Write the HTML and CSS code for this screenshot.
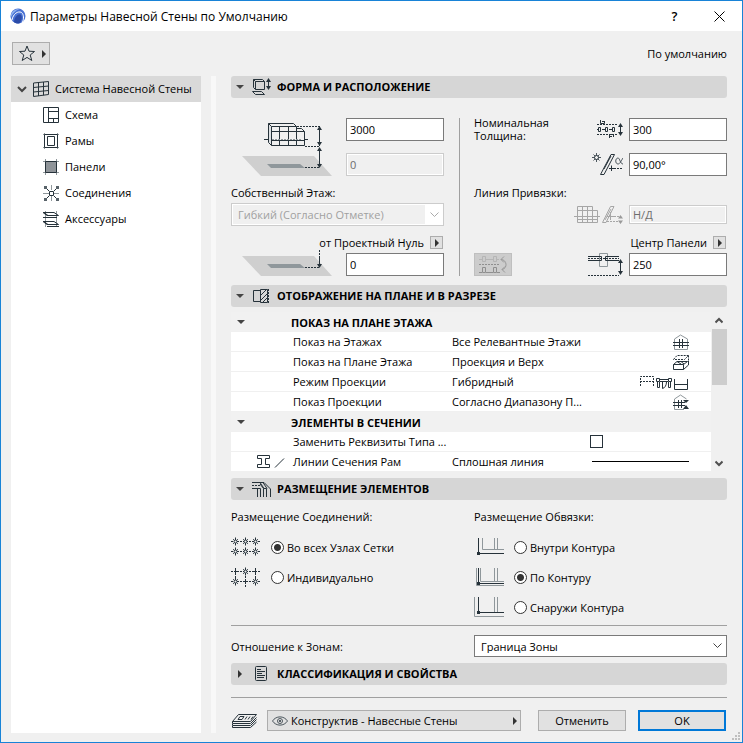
FILE: index.html
```html
<!DOCTYPE html>
<html lang="ru">
<head>
    <meta charset="UTF-8">
    <meta name="viewport" content="width=device-width, initial-scale=1.0">
    <title>Параметры Навесной Стены по Умолчанию</title>
    <link rel="stylesheet" href="styles.css">
</head>
<body>
    <div class="window">
        <header class="titlebar">
            <svg class="logo" width="16" height="16" viewBox="0 0 16 16">
                <circle cx="8" cy="8" r="7.500" fill="#4a72d4"/>
                <path d="M.5 10C.5 4 5 .5 10 .8C6 2 3 5 .5 10Z" fill="#8fb2ee"/>
                <path d="M2 12C3 6 8 2.500 11.500 4.500C14 6.500 14 11 12.500 14" fill="none" stroke="#fff"/>
                <path d="M4 14C4.500 9 8 5.500 10.500 6.500C12.500 8 12 12 10 15C8 16 5.500 15.500 4 14Z" fill="#2b4ba8"/>
            </svg>
            <h1>Параметры Навесной Стены по Умолчанию</h1>
            <button class="win-btn" type="button" aria-label="Справка">?</button>
            <button class="win-btn" type="button" aria-label="Закрыть">
                <svg width="11" height="11" viewBox="0 0 11 11"><path d="M.5 .5L10.500 10.500M10.500 .5L.5 10.500" stroke="#000" fill="none"/></svg>
            </button>
        </header>

        <div class="toolbar">
            <button class="favorite" type="button" aria-label="Избранное">
                <svg width="16" height="17" viewBox="0 0 16 17"><path class="ln" d="M8 1L10 6.200L15.500 6.500L11.200 10L12.800 15.500L8 12.400L3.200 15.500L4.800 10L.5 6.500L6 6.200Z"/></svg>
                <svg width="4" height="8" viewBox="0 0 4 8"><path d="M0 0L4 4L0 8Z" fill="#333"/></svg>
            </button>
            <span>По умолчанию</span>
        </div>

        <div class="content">
            <nav class="tree">
                <a class="tree-root" href="#">
                    <svg width="10" height="7" viewBox="0 0 10 7"><path d="M1 1L5 5L9 1" fill="none" stroke="#444" stroke-width="2"/></svg>
                    <svg width="16" height="16" viewBox="0 0 16 16">
                        <path class="ln" d="M.5 2L15.500 .5V13.500L.5 15.500ZM5.500 1.500V15M10.500 1V14.300M.5 6.500L15.500 5M.5 11L15.500 9.500"/>
                    </svg>
                    <span>Система Навесной Стены</span>
                </a>
                <a href="#">
                    <svg width="16" height="16" viewBox="0 0 16 16"><path class="ln" d="M.5 .5H15.500V15.500H.5ZM5.500 .5V15.500M5.500 4.500H15.500M5.500 11.500H15.500M10.500 11.500V15.500"/></svg>
                    <span>Схема</span>
                </a>
                <a href="#">
                    <svg width="16" height="16" viewBox="0 0 16 16">
                        <path class="ln soft" d="M1.500 0V16M14.500 0V16M0 1.500H16M0 14.500H16"/>
                        <path class="ln" d="M1.500 1.500H14.500V14.500H1.500ZM4.500 3.500H11.500V12.500H4.500Z"/>
                    </svg>
                    <span>Рамы</span>
                </a>
                <a href="#">
                    <svg width="16" height="16" viewBox="0 0 16 16">
                        <path class="ln soft" d="M2.500 0V16M13.500 0V16M0 2.500H16M0 13.500H16"/>
                        <path d="M2.500 2.500H13.500V13.500H2.500Z" fill="#8f9499" stroke="#26323a"/>
                    </svg>
                    <span>Панели</span>
                </a>
                <a href="#">
                    <svg width="16" height="16" viewBox="0 0 16 16">
                        <path class="ln soft" d="M8.500 0V5M8.500 10V16M0 8.500H6M11 8.500H16"/>
                        <path class="ln" d="M6.500 6.500H10.500V10.500H6.500ZM6 6L3 3M11 6L14 3M6 11L3 14M11 11L14 14"/>
                        <path d="M1 1H4V4H1ZM13 1H16V4H13ZM1 13H4V16H1ZM13 13H16V16H13Z" fill="#59636a"/>
                    </svg>
                    <span>Соединения</span>
                </a>
                <a href="#">
                    <svg width="16" height="16" viewBox="0 0 16 16">
                        <path class="ln soft" d="M2.500 0V16M13.500 0V16"/>
                        <path class="ln" d="M0 1.500H11L15.500 4.500H4ZM1 1.500L5 4.500M0 6.500H14M0 10.500H11L15.500 13.500H4ZM1 10.500L5 13.500M4 15.500H16"/>
                    </svg>
                    <span>Аксессуары</span>
                </a>
            </nav>

            <div class="splitter"></div>

            <main class="panels">
                <h2 class="panel-head">
                    <i class="arrow-down"></i>
                    <svg width="20" height="18" viewBox="0 0 20 18">
                        <path class="ln" d="M1.500 1.500H10.500L12.500 3.500V11.500H3.500L1.500 9.500ZM1.500 1.500L3.500 3.500V11.500M3.500 3.500H12.500M.5 13.500H9.500L12.500 16.500H3.500ZM16.500 2V11"/>
                        <path class="solid" d="M16.500 0L19 4H14ZM16.500 12L19 8H14Z"/>
                    </svg>
                    <span>ФОРМА И РАСПОЛОЖЕНИЕ</span>
                </h2>

                <section class="columns shape">
                    <div class="column">
                        <div class="field-row">
                            <svg width="90" height="58" viewBox="0 0 90 58">
                                <path d="M0 38H72L90 58H19Z" fill="#cfcfcf"/>
                                <path d="M25 46H58L63 50H29Z" fill="#8f979b"/>
                                <path d="M26 5L30 9V27L26 24Z" fill="#dde1e4"/>
                                <path class="ln" d="M26.500 24.500V5.500H51.500L54.500 8.500V27.500H29.500L26.500 24.500M29.500 27.500V8.500H54.500M26.500 5.500L29.500 8.500M54.500 10.500H59.500L62.500 13.500V27.500H54.500M54.500 13.500H62.500M37.500 8.500V27.500M46.500 8.500V27.500M29.500 13.500H54.500M29.500 22.500H62.500M22 21.500H26M62 21.500H66"/>
                                <path class="ln soft dash" d="M30 21.500H60"/>
                                <path class="ln dash" d="M55 8.500H78M63 28.500H78M63 49.500H78"/>
                                <path class="ln" d="M77.500 10V28M77.500 30V49"/>
                                <path class="solid" d="M77.500 8L80 12H75ZM77.500 28L80 24H75ZM77.500 29L80 33H75ZM77.500 50L80 46H75Z"/>
                            </svg>
                            <div class="stack">
                                <input type="text" value="3000" aria-label="Высота">
                                <input type="text" value="0" aria-label="Отметка" disabled>
                            </div>
                        </div>
                        <label class="caption" for="story">Собственный Этаж:</label>
                        <select id="story" class="wide" disabled>
                            <option>Гибкий (Согласно Отметке)</option>
                        </select>
                        <div class="link-row">
                            <label for="zero">от Проектный Нуль</label>
                            <button class="mini" type="button" aria-label="Выбрать начало отсчета"></button>
                        </div>
                        <div class="field-row">
                            <svg class="over" width="90" height="26" viewBox="0 0 90 26">
                                <path d="M0 6H72L90 26H19Z" fill="#cfcfcf"/>
                                <path d="M25 14H58L63 18H29Z" fill="#8f979b"/>
                                <path class="ln dash" d="M63 17.500H77M77.500 0V6"/>
                                <path class="ln" d="M77.500 6V17"/>
                                <path class="solid" d="M77.500 18L80 14H75Z"/>
                            </svg>
                            <input type="text" id="zero" value="0">
                        </div>
                    </div>

                    <div class="divider"></div>

                    <div class="column">
                        <div class="field-row">
                            <label class="grow" for="thick">Номинальная Толщина:</label>
                            <svg width="26" height="23" viewBox="0 0 26 23">
                                <path class="ln dash" d="M0 6.500H20M0 16.500H20"/>
                                <path class="ln" d="M3.500 2V5.500H7.500V3M5 3.500H7M12.500 20V16.500H16.500V19M13 18.500H15M0 11.500H2M5 11.500H9M12 11.500H16M1.500 9.500H3.500V13.500H1.500ZM8.500 9.500H10.500V13.500H8.500ZM15.500 9.500H17.500V13.500H15.500ZM23.500 7V16"/>
                                <path class="solid" d="M23.500 5L26 9H21ZM23.500 18L26 14H21Z"/>
                            </svg>
                            <input type="text" id="thick" value="300">
                        </div>
                        <div class="field-row spaced">
                            <svg width="31" height="23" viewBox="0 0 31 23">
                                <path class="ln thin" d="M4.500 0V9M0 4.500H9M1.500 1.500L7.500 7.500M7.500 1.500L1.500 7.500"/>
                                <circle cx="4.500" cy="4.500" r="2" fill="#f0f0f0" stroke="#26323a"/>
                                <path class="ln" d="M8.500 21.500L19 1.500H22.500L12 21.500ZM12 16L19 3M19.500 12.500V18M17 15.500H22"/>
                                <path class="ln dash" d="M22 15.500H31"/>
                                <path class="ln thin" d="M31 5C29 8 28 11 26 11C23 11 23 5 26 5C28 5 28 11 31 11"/>
                            </svg>
                            <input type="text" value="90,00°" aria-label="Угол наклона">
                        </div>
                        <label class="caption" for="refline">Линия Привязки:</label>
                        <div class="field-row refline">
                            <svg width="49" height="19" viewBox="0 0 49 19">
                                <path class="ln pale" d="M3.500 1.500H18.500V5.500H23.500V17.500H3.500ZM8.500 1V17M13.500 1V17M18.500 5V17M3.500 5.500H19M3.500 14.500H23M0 11.500H26M28.500 17.500L36.500 1.500H40L32 17.500ZM31 15L37 4M36.500 7V15M33 11.500H40"/>
                                <path class="ln pale dash" d="M33 16.500H45M40 11.500H45"/>
                                <path d="M46.500 10L49 13.500H44ZM46.500 19L49 15.500H44Z" fill="#999"/>
                            </svg>
                            <input class="short" type="text" id="refline" value="Н/Д" disabled>
                        </div>
                        <div class="link-row center">
                            <label for="offset">Центр Панели</label>
                            <button class="mini" type="button" aria-label="Выбрать привязку"></button>
                        </div>
                        <div class="field-row">
                            <button class="flip" type="button" aria-label="Отразить" disabled>
                                <svg width="28" height="19" viewBox="0 0 28 19">
                                    <path d="M0 4.500H3M7 4.500H14M18 4.500H20M3.500 1.500H6.500V6.500H3.500ZM14.500 1.500H17.500V6.500H14.500Z" fill="none" stroke="#b5b5b5"/>
                                    <path d="M0 17.500H3M7 17.500H14M18 17.500H21M3.500 12.500H6.500V17.500H3.500ZM14.500 12.500H17.500V17.500H14.500Z" fill="none" stroke="#8f8f8f"/>
                                    <path class="dash" d="M0 9.500H21" fill="none" stroke="#8f8f8f"/>
                                    <path d="M22 4.500C28 4.500 29 13.500 23 14.500M25 1.500L22 4.500L25 7.500M26 11.500L23 14.500L26 17.500" fill="none" stroke="#999"/>
                                </svg>
                            </button>
                            <svg width="35" height="23" viewBox="0 0 35 23">
                                <path class="ln soft" d="M11.500 .5H19.500V13.500H11.500Z"/>
                                <path class="ln" d="M0 3.500H13.500V7.500H0M31 3.500H17.500V7.500H31M32.500 8V20"/>
                                <path class="ln dash" d="M0 5.500H31M0 22.500H31"/>
                                <path class="solid" d="M32.500 6L35 10H30ZM32.500 22L35 18H30Z"/>
                            </svg>
                            <input type="text" id="offset" value="250">
                        </div>
                    </div>
                </section>

                <h2 class="panel-head">
                    <i class="arrow-down"></i>
                    <svg width="20" height="18" viewBox="0 0 20 18">
                        <path class="ln" d="M8 3.500H1.500V14.500H8M8.500 2.500H15.500V15.500H8.500ZM9 8L14 3M9 13L15 7M11 15L15 11"/>
                        <path class="ln dash" d="M16.500 2V17"/>
                    </svg>
                    <span>ОТОБРАЖЕНИЕ НА ПЛАНЕ И В РАЗРЕЗЕ</span>
                </h2>

                <div class="list">
                    <table>
                        <colgroup><col class="c-icon"><col class="c-name"><col><col class="c-mark"></colgroup>
                        <tbody>
                            <tr class="group">
                                <td><i class="arrow-down"></i></td>
                                <th colspan="3">ПОКАЗ НА ПЛАНЕ ЭТАЖА</th>
                            </tr>
                            <tr>
                                <td></td><td>Показ на Этажах</td><td>Все Релевантные Этажи</td>
                                <td class="mark">
                                    <svg width="16" height="16" viewBox="0 0 16 16">
                                        <path class="ln soft" d="M1.500 15.500V5L7.500 1L14.500 5V15.500Z"/>
                                        <path class="ln" d="M0 8.500H16M0 11.500H16M6.500 5V14M9.500 5V14"/>
                                    </svg>
                                </td>
                            </tr>
                            <tr>
                                <td></td><td>Показ на Плане Этажа</td><td>Проекция и Верх</td>
                                <td class="mark">
                                    <svg width="16" height="16" viewBox="0 0 16 16">
                                        <path class="ln dash" d="M.5 5.500L4 1.500H15.500L11.500 5.500ZM15.500 1.500V8"/>
                                        <path class="ln" d="M.5 10.500H10.500V15.500H.5ZM.5 10.500L4 7.500H14.500L10.500 10.500M10.500 15.500L15.500 11V7M4 7.500L8 10M8 7.500L11 10"/>
                                    </svg>
                                </td>
                            </tr>
                            <tr>
                                <td></td><td>Режим Проекции</td><td>Гибридный</td>
                                <td class="mark">
                                    <svg width="49" height="16" viewBox="0 0 49 16">
                                        <path class="ln dash" d="M.5 12V2.500H13.500V12M0 7.500H14"/>
                                        <path class="ln" d="M16.500 4.500H19.500V7.500H16.500ZM28.500 4.500H31.500V7.500H28.500ZM17.500 8V13.500H19.500V8M28.500 8V13.500H30.500V8M20 5.500H28M20 7.500H28M22.500 8V14.500C25 14 26.500 11 26.500 8M34.500 5V15.500H47.500V5M34.500 10.500H47.500"/>
                                    </svg>
                                </td>
                            </tr>
                            <tr>
                                <td></td><td>Показ Проекции</td><td>Согласно Диапазону П...</td>
                                <td class="mark">
                                    <svg width="16" height="16" viewBox="0 0 16 16">
                                        <path class="ln soft" d="M11 15.500H1.500V5L7.500 1L13.500 5"/>
                                        <path class="ln" d="M0 8.500H12M0 11.500H12M5.500 6V14M8.500 6V14"/>
                                        <path class="solid" d="M10 6H16L13 9ZM10 15H16L13 11Z"/>
                                    </svg>
                                </td>
                            </tr>
                            <tr class="group">
                                <td><i class="arrow-down"></i></td>
                                <th colspan="3">ЭЛЕМЕНТЫ В СЕЧЕНИИ</th>
                            </tr>
                            <tr>
                                <td></td><td><label for="replace">Заменить Реквизиты Типа ...</label></td><td></td>
                                <td><input type="checkbox" id="replace"></td>
                            </tr>
                            <tr>
                                <td class="pen">
                                    <svg width="28" height="14" viewBox="0 0 28 14">
                                        <path class="ln" d="M.5 .5H12.500V3.500H8.500V9.500H12.500V12.500H.5V9.500H4.500V3.500H.5ZM18 12.500L27 3.500"/>
                                    </svg>
                                </td>
                                <td>Линии Сечения Рам</td><td>Сплошная линия</td>
                                <td class="mark"><i class="line-sample"></i></td>
                            </tr>
                        </tbody>
                    </table>
                    <div class="scrollbar">
                        <svg width="8" height="7" viewBox="0 0 8 7"><path d="M.5 5.500L4 2L7.500 5.500" fill="none" stroke="#505050" stroke-width="2"/></svg>
                        <div class="thumb"></div>
                        <svg width="8" height="7" viewBox="0 0 8 7"><path d="M.5 1.500L4 5L7.500 1.500" fill="none" stroke="#505050" stroke-width="2"/></svg>
                    </div>
                </div>

                <h2 class="panel-head">
                    <i class="arrow-down"></i>
                    <svg width="20" height="18" viewBox="0 0 20 18">
                        <path class="ln" d="M0 2.500H12L18.500 9V17M0 8.500H8.500V17M5.500 9V17M11.500 17V8.500L8 4M14.500 17V8.500H11.500M8 2.500L12 8.500M11 2.500L15 8.500"/>
                        <path class="ln dash" d="M0 5.500H9"/>
                    </svg>
                    <span>РАЗМЕЩЕНИЕ ЭЛЕМЕНТОВ</span>
                </h2>

                <section class="columns placement">
                    <div class="column">
                        <p>Размещение Соединений:</p>
                        <div class="radio-row">
                            <svg width="30" height="20" viewBox="0 0 30 20">
                                <defs>
                                    <g id="node">
                                        <path class="ln thin" d="M-2.500 -2.500L2.500 2.500M2.500 -2.500L-2.500 2.500"/>
                                        <path class="ln" d="M0 -4V4"/>
                                        <circle r="1.500" fill="#f0f0f0" stroke="#26323a"/>
                                    </g>
                                </defs>
                                <path class="ln dash" d="M0 4.500H30M0 14.500H30"/>
                                <use href="#node" x="4.500" y="4.500"/><use href="#node" x="14.500" y="4.500"/><use href="#node" x="24.500" y="4.500"/>
                                <use href="#node" x="4.500" y="14.500"/><use href="#node" x="14.500" y="14.500"/><use href="#node" x="24.500" y="14.500"/>
                            </svg>
                            <input type="radio" name="joints" id="jAll" checked>
                            <label for="jAll">Во всех Узлах Сетки</label>
                        </div>
                        <div class="radio-row">
                            <svg width="30" height="20" viewBox="0 0 30 20">
                                <path class="ln dash" d="M0 4.500H30M0 14.500H30M4.500 6V11M14.500 9V20M24.500 6V11"/>
                                <path class="ln" d="M3 4.500H6M4.500 1V7M23 4.500H26M24.500 1V7M13 14.500H16M14.500 13V16"/>
                                <use href="#node" x="14.500" y="4.500"/><use href="#node" x="4.500" y="14.500"/><use href="#node" x="24.500" y="14.500"/>
                            </svg>
                            <input type="radio" name="joints" id="jOne">
                            <label for="jOne">Индивидуально</label>
                        </div>
                    </div>
                    <div></div>
                    <div class="column">
                        <p>Размещение Обвязки:</p>
                        <div class="radio-row">
                            <svg width="30" height="20" viewBox="0 0 30 20">
                                <path class="ln soft" d="M8.500 1V12.500H30M20.500 1V12M23.500 1V12"/>
                                <path class="ln" d="M4.500 1V16.500H30"/>
                                <path class="solid" d="M3 15H6V18H3Z"/>
                            </svg>
                            <input type="radio" name="frame" id="fIn">
                            <label for="fIn">Внутри Контура</label>
                        </div>
                        <div class="radio-row">
                            <svg width="30" height="20" viewBox="0 0 30 20">
                                <path class="ln soft" d="M2.500 1V18.500H30M6.500 1V14.500H30M20.500 1V14M23.500 1V14"/>
                                <path class="ln" d="M4.500 1V16.500H30"/>
                                <path class="solid" d="M3 15H6V18H3Z"/>
                            </svg>
                            <input type="radio" name="frame" id="fOn" checked>
                            <label for="fOn">По Контуру</label>
                        </div>
                        <div class="radio-row">
                            <svg width="30" height="20" viewBox="0 0 30 20">
                                <path class="ln soft" d="M.5 0V19.500H30M20.500 0V15M23.500 0V15"/>
                                <path class="ln" d="M4.500 0V15.500H30"/>
                                <path class="solid" d="M3 14H6V17H3Z"/>
                            </svg>
                            <input type="radio" name="frame" id="fOut">
                            <label for="fOut">Снаружи Контура</label>
                        </div>
                    </div>
                </section>

                <div class="columns zones">
                    <label for="zone">Отношение к Зонам:</label>
                    <div></div>
                    <select id="zone" class="wide">
                        <option>Граница Зоны</option>
                    </select>
                </div>

                <h2 class="panel-head">
                    <i class="arrow-right"></i>
                    <svg width="20" height="18" viewBox="0 0 20 18">
                        <rect class="ln" x="3.500" y="1.500" width="11" height="14" rx="1"/>
                        <path class="ln" d="M5 4.500H9M5 6.500H13M5 8.500H10M5 10.500H13M5 12.500H12"/>
                    </svg>
                    <span>КЛАССИФИКАЦИЯ И СВОЙСТВА</span>
                </h2>

                <footer class="bottom">
                    <svg width="28" height="16" viewBox="0 0 28 16">
                        <path class="ln" d="M7.500 1.500H25.500L19.500 8.500H1.500ZM9 3.500H13L11 6.500H7ZM16 3.500L14 6.500M19 3.500L17 6.500M22 3.500L20 6.500M1.500 8.500V10.500H19.500L25.500 4.500M1.500 11V12.500H19.500L25.500 6.500M1.500 13V14.500H19.500L25.500 9"/>
                    </svg>
                    <button class="layer" type="button">
                        <svg width="16" height="10" viewBox="0 0 16 10">
                            <path class="ln thin" d="M.5 5C4 -.5 12 -.5 15.500 5C12 10.500 4 10.500 .5 5Z"/>
                            <circle class="ln thin" cx="8" cy="5" r="2.500"/><circle class="solid" cx="8" cy="5" r="1"/>
                        </svg>
                        <span>Конструктив - Навесные Стены</span>
                        <i class="arrow-right"></i>
                    </button>
                    <button class="btn" type="button">Отменить</button>
                    <button class="btn ok" type="button">OK</button>
                </footer>
            </main>
        </div>

        <svg class="grip" width="8" height="8" viewBox="0 0 8 8"><path d="M6 0H8V2H6ZM3 3H5V5H3ZM6 3H8V5H6ZM0 6H2V8H0ZM3 6H5V8H3ZM6 6H8V8H6Z" fill="#bfbfbf"/></svg>
    </div>
</body>
</html>
```

FILE: styles.css
```css
* {
    margin: 0;
    padding: 0;
    box-sizing: border-box;
}

body,
button,
input,
select {
    font-family: "Open Sans", "Noto Sans", sans-serif;
    font-size: 11px;
    line-height: 13px;
    color: #000;
}

svg {
    display: block;
    flex: none;
}

/* icon strokes */
.ln {
    fill: none;
    stroke: #26323a;
    stroke-width: 1px;
}

.thin {
    stroke: #4d575e;
}

.soft {
    stroke: #8f979b;
}

.pale {
    stroke: #a6a6a6;
}

.dash {
    stroke-dasharray: 2 1;
}

.solid {
    fill: #26323a;
}

.arrow-down {
    border: 4px solid transparent;
    border-top-color: #444;
    border-bottom: 0;
}

.arrow-right {
    border: 4px solid transparent;
    border-left-color: #333;
    border-right: 0;
}

.window {
    position: relative;
    display: flex;
    flex-direction: column;
    min-height: 100vh;
    background: #f0f0f0;
    border: 1px solid #1883d7;
}

.titlebar {
    display: flex;
    align-items: center;
    height: 30px;
    padding-left: 9px;
    background: #fff;
}

.titlebar h1 {
    flex: 1;
    margin-left: 4px;
    font-size: 12px;
    font-weight: normal;
}

.win-btn {
    display: flex;
    align-items: center;
    justify-content: center;
    width: 45px;
    height: 30px;
    border: none;
    background: none;
    font-size: 13px;
    font-weight: 600;
}

.toolbar {
    display: flex;
    align-items: center;
    justify-content: space-between;
    padding: 11px 15px 11px 11px;
}

.favorite {
    display: flex;
    align-items: center;
    justify-content: flex-end;
    gap: 7px;
    width: 38px;
    height: 23px;
    padding-right: 3px;
    border: 1px solid #adadad;
    background: #e1e1e1;
}

.content {
    display: flex;
    flex: 1;
    padding: 0 15px 9px 10px;
}

/* settings tree */
.tree {
    width: 190px;
    background: #fff;
}

.tree a {
    display: flex;
    align-items: center;
    gap: 6px;
    height: 26px;
    padding-left: 32px;
    color: #000;
    text-decoration: none;
}

.tree .tree-root {
    padding-left: 6px;
    background: #d9d9d9;
}

.tree span,
.panel-head span {
    padding-bottom: 2px;
}

.splitter {
    width: 5px;
    margin: 0 15px 0 10px;
    background: #f8f8f8;
}

.panels {
    flex: 1;
    min-width: 0;
}

.panel-head {
    display: flex;
    align-items: center;
    height: 22px;
    padding-left: 5px;
    border-radius: 3px;
    background: #d6d6d6;
    font-size: 11px;
    font-weight: bold;
}

.panel-head svg {
    margin: 0 5px 0 8px;
}

.panel-head .arrow-right {
    margin: 0 2px;
}

.columns {
    display: grid;
    grid-template-columns: 213fr 2px 253fr;
    column-gap: 14px;
}

/* geometry */
.shape {
    padding: 20px 0 9px;
}

.divider {
    justify-self: end;
    width: 1px;
    background: #a0a0a0;
}

.field-row {
    display: flex;
    align-items: flex-end;
    justify-content: flex-end;
}

.shape .column:first-child .field-row {
    gap: 14px;
}

.shape .column:last-child .field-row {
    gap: 6px;
}

.over {
    margin-top: -3px;
}

.grow {
    flex: 1;
    margin: -2px 0 -1px;
}

.spaced {
    margin-top: 12px;
}

.stack {
    display: flex;
    flex-direction: column;
    gap: 12px;
}

input[type="text"] {
    width: 98px;
    height: 23px;
    padding: 0 3px;
    border: 1px solid #7a7a7a;
    background: #fff;
}

input[type="text"]:disabled {
    border-color: #ccc;
    background: #f0f0f0;
    box-shadow: inset 0 0 0 1px #fff;
    color: #6d6d6d;
}

input[type="text"].short {
    height: 19px;
}

.caption {
    display: block;
    margin: 10px 0 4px;
}

.refline {
    margin-top: 6px;
}

select.wide {
    display: block;
    width: 100%;
    height: 23px;
    padding: 0 6px;
    border: 1px solid #7a7a7a;
    border-radius: 0;
    appearance: none;
    background: #fff url("data:image/svg+xml,%3Csvg xmlns='http://www.w3.org/2000/svg' width='9' height='6'%3E%3Cpath d='M.5 .5L4.500 4.500L8.500 .5' fill='none' stroke='%23444'/%3E%3C/svg%3E") no-repeat right 4px center;
}

select.wide:disabled {
    border-color: #ccc;
    opacity: 1;
    color: #a0a0a0;
    background-image: url("data:image/svg+xml,%3Csvg xmlns='http://www.w3.org/2000/svg' width='9' height='6'%3E%3Cpath d='M.5 .5L4.500 4.500L8.500 .5' fill='none' stroke='%23aaa'/%3E%3C/svg%3E"), linear-gradient(#f0f0f0, #f0f0f0);
    background-position: right 4px center, 1px 1px;
    background-size: auto, calc(100% - 19px) calc(100% - 2px);
    background-repeat: no-repeat;
}

.link-row {
    display: flex;
    align-items: center;
    justify-content: flex-end;
    gap: 6px;
    padding: 10px 1px 4px 0;
}

.link-row.center {
    padding-top: 12px;
}

.mini {
    display: flex;
    align-items: center;
    justify-content: center;
    width: 13px;
    height: 13px;
    border: 1px solid #adadad;
    background: #e1e1e1;
}

.mini::before {
    content: "";
    border: 4px solid transparent;
    border-left-color: #333;
    border-right: 0;
}

.flip {
    display: flex;
    align-items: center;
    justify-content: center;
    width: 38px;
    height: 23px;
    margin-right: auto;
    border: 1px solid #bfbfbf;
    background: #ccc;
}

/* plan and section list */
.list {
    display: flex;
    margin: 5px 0 6px;
}

.list table {
    flex: 1;
    table-layout: fixed;
    border-spacing: 0;
    background: #fff;
}

.list tr {
    height: 20px;
}

.list td {
    padding-left: 2px;
    border-bottom: 1px solid #f0f0f0;
}

.list .group {
    background: #f1f1f1;
}

.list th {
    text-align: left;
}

.c-icon {
    width: 60px;
}

.c-name {
    width: 159px;
}

.c-mark {
    width: 123px;
}

.list .arrow-down {
    display: block;
    width: 0;
    margin-left: 4px;
}

.list td.mark {
    padding-right: 22px;
}

.mark svg {
    margin-left: auto;
}

.pen svg {
    margin-left: 24px;
}

.line-sample {
    display: block;
    height: 1px;
    margin-left: 2px;
    background: #000;
}

input[type="checkbox"] {
    display: block;
    width: 13px;
    height: 13px;
    border: 1px solid #26323a;
    appearance: none;
    background: #fff;
}

input[type="checkbox"]:checked {
    background: #26323a;
}

.scrollbar {
    display: flex;
    flex-direction: column;
    align-items: center;
    width: 16px;
    padding: 5px 0;
}

.thumb {
    width: 15px;
    height: 56px;
    margin: 5px 0 auto;
    background: #cdcdcd;
}

/* element placement */
.placement {
    padding: 10px 0 3px;
    border-bottom: 1px solid #a0a0a0;
}

.placement p {
    margin-bottom: 9px;
}

.radio-row {
    display: flex;
    align-items: center;
    height: 30px;
}

input[type="radio"] {
    width: 13px;
    height: 13px;
    margin: 0 3px 0 10px;
    border: 1px solid #333;
    border-radius: 50%;
    appearance: none;
    background: #fff;
}

input[type="radio"]:checked {
    background: radial-gradient(circle, #333 3px, #fff 4px);
}

.zones {
    align-items: center;
    padding: 9px 0 6px;
}

.zones select.wide {
    height: 22px;
}

.bottom {
    display: flex;
    align-items: center;
    margin-top: 12px;
    padding: 12px 1px 0 0;
    border-top: 1px solid #a0a0a0;
}

.layer {
    display: flex;
    flex: 1;
    align-items: center;
    gap: 3px;
    height: 21px;
    margin: 0 17px 0 8px;
    padding: 0 3px 0 4px;
    border: 1px solid #adadad;
    background: #e1e1e1;
}

.layer .arrow-right {
    margin-left: auto;
}

.btn {
    width: 88px;
    height: 21px;
    border: 1px solid #adadad;
    background: #e1e1e1;
}

.btn.ok {
    margin-left: 12px;
    border: 2px solid #0078d7;
}

.grip {
    position: absolute;
    right: 2px;
    bottom: 2px;
}
```
